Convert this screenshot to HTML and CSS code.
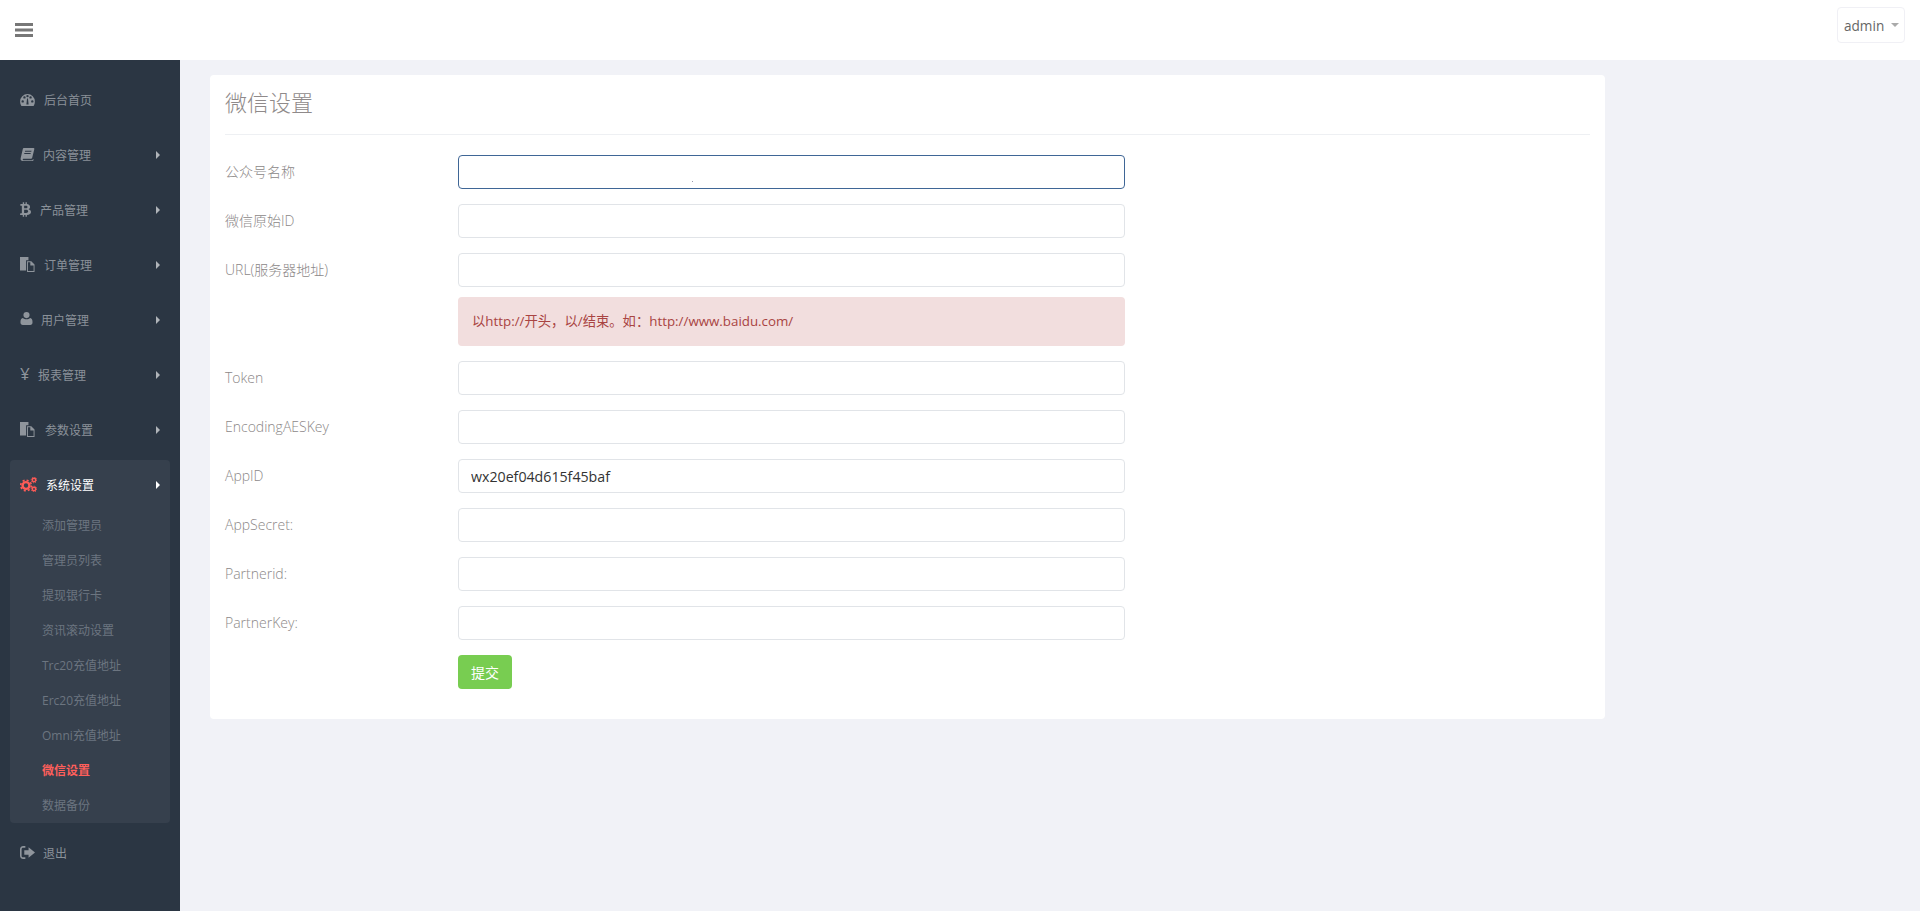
FILE: index.html
```html
<!DOCTYPE html>
<html lang="zh">
<head>
<meta charset="utf-8">
<title>微信设置</title>
<link rel="stylesheet" href="styles.css">
</head>
<body>
<header class="topbar">
  <svg class="burger" viewBox="0 0 18 14"><path d="M0 0h18v3H0zM0 5.500h18v3H0zM0 11h18v3H0z"/></svg>
  <button class="user-btn">admin <span class="caret"></span></button>
</header>
<div class="main">
  <aside class="sidebar">
    <a class="nav-item"><svg class="ico ico-gauge" viewBox="0 0 16 13"><path fill-rule="evenodd" d="M8 0a8 8 0 0 0-8 8c0 1.700.4 3 1.100 4.400.2.400.5.600.9.600h12c.4 0 .7-.2.900-.6.700-1.400 1.100-2.700 1.100-4.400a8 8 0 0 0-8-8zM2.800 9.300a1.300 1.300 0 1 1 0-2.600 1.300 1.300 0 0 1 0 2.600zM4.700 5a1.300 1.300 0 1 1 0-2.600 1.300 1.300 0 0 1 0 2.600zM8 3.600a1.300 1.300 0 1 1 0-2.600 1.300 1.300 0 0 1 0 2.600zm1.200 7.900H6.800L7.500 5h1zM11.300 5a1.300 1.300 0 1 1 0-2.600 1.300 1.300 0 0 1 0 2.600zm1.900 4.300a1.300 1.300 0 1 1 0-2.600 1.300 1.300 0 0 1 0 2.600z"/></svg><span class="gap-9">后台首页</span></a>
    <a class="nav-item"><svg class="ico" viewBox="0 0 16 16"><path fill-rule="evenodd" d="M4 1h10.500c.6 0 .9.400.8 1l-2.300 9.500c-.2.700-.6 1-1.300 1H3.500c-.8 0-.8 1.500.2 1.500h9.500l.5-1 1 .3-.8 1.700H3c-1.700 0-2.700-1.500-2.300-3L3 2c.2-.6.500-1 1-1zm1.500 3-.3 1H12l.3-1zm-.8 2.500-.3 1h6.800l.3-1z"/></svg><span class="gap-8">内容管理</span><i class="arrow"></i></a>
    <a class="nav-item"><svg class="ico ico-narrow" viewBox="0 0 12 16"><path fill-rule="evenodd" d="M3 0h1.500v2H6V0h1.500v2.100C9.500 2.400 11 3.500 11 5.200c0 1.100-.6 2-1.700 2.500C10.900 8.100 12 9.200 12 10.800c0 2-1.600 3.100-4.500 3.200V16H6v-2H4.500v2H3v-2H0l.4-2H2V4H.4V2H3zm1.500 3.800v2.800h2c1 0 1.700-.5 1.700-1.400 0-.9-.7-1.400-1.700-1.400zm0 4.500v3.400h2.300c1.200 0 2.100-.6 2.100-1.700 0-1.100-.9-1.700-2.100-1.700z"/></svg><span class="gap-9">产品管理</span><i class="arrow"></i></a>
    <a class="nav-item"><svg class="ico" viewBox="0 0 16 16"><path fill-rule="evenodd" d="M0 0h9v3.500H6.500v11H0zM7.500 4.500H12L15.500 8v8h-8zm1 1v9.500h6V9h-3.500V5.500z"/></svg><span class="gap-9">订单管理</span><i class="arrow"></i></a>
    <a class="nav-item"><svg class="ico ico-user" viewBox="0 0 13 14"><path d="M6.500 0a3.300 3.300 0 1 1 0 6.600 3.300 3.300 0 0 1 0-6.600zM2.500 6.500c1 1 2.500 1.300 4 1.300s3-.3 4-1.300c1.700.2 2.500 2 2.500 4.500 0 2-1 3-2.500 3h-8C1 14 0 13 0 11c0-2.500.8-4.300 2.500-4.500z"/></svg><span class="gap-8">用户管理</span><i class="arrow"></i></a>
    <a class="nav-item"><span class="yen">¥</span><span class="gap-8">报表管理</span><i class="arrow"></i></a>
    <a class="nav-item"><svg class="ico" viewBox="0 0 16 16"><path fill-rule="evenodd" d="M0 0h9v3.500H6.500v11H0zM7.500 4.500H12L15.500 8v8h-8zm1 1v9.500h6V9h-3.500V5.500z"/></svg><span class="gap-10">参数设置</span><i class="arrow"></i></a>
    <div class="nav-group">
      <a class="nav-item active"><svg class="ico ico-cogs" viewBox="0 0 17 15"><g fill="none" stroke="#ff5b57"><circle cx="6" cy="8.500" r="3.400" stroke-width="2.400"/><circle cx="6" cy="8.500" r="5.300" stroke-width="1.600" stroke-dasharray="2.080 2.080"/><circle cx="14" cy="3" r="1.700" stroke-width="1.500"/><circle cx="14" cy="3" r="2.800" stroke-width="1" stroke-dasharray="1.100 1.100"/><circle cx="14" cy="12" r="1.700" stroke-width="1.500"/><circle cx="14" cy="12" r="2.800" stroke-width="1" stroke-dasharray="1.100 1.100"/></g></svg><span class="gap-9">系统设置</span><i class="arrow"></i></a>
      <ul class="subnav">
        <li>添加管理员</li>
        <li>管理员列表</li>
        <li>提现银行卡</li>
        <li>资讯滚动设置</li>
        <li>Trc20充值地址</li>
        <li>Erc20充值地址</li>
        <li>Omni充值地址</li>
        <li class="current">微信设置</li>
        <li>数据备份</li>
      </ul>
    </div>
    <a class="nav-item logout"><svg class="ico ico-exit" viewBox="0 0 14 12"><path d="M5 0v1.500H3C2 1.500 1.500 2 1.500 3v6c0 1 .5 1.500 1.500 1.500h2V12H3C1.200 12 0 10.800 0 9V3C0 1.200 1.200 0 3 0z"/><path d="M8 1l6 5-6 5V8H4V4h4z"/></svg><span class="gap-8">退出</span></a>
  </aside>
  <main class="content">
    <section class="card">
      <h1 class="card-title">微信设置</h1>
      <form class="form">
        <div class="row"><label>公众号名称</label><input class="field focused" type="text"></div>
        <div class="row"><label>微信原始ID</label><input class="field" type="text"></div>
        <div class="row"><label>URL(服务器地址)</label><input class="field" type="text"></div>
        <div class="row"><span class="spacer"></span><div class="alert">以http://开头，以/结束。如：http://www.baidu.com/</div></div>
        <div class="row"><label>Token</label><input class="field" type="text"></div>
        <div class="row"><label>EncodingAESKey</label><input class="field" type="text"></div>
        <div class="row"><label>AppID</label><input class="field" type="text" value="wx20ef04d615f45baf"></div>
        <div class="row"><label>AppSecret:</label><input class="field" type="text"></div>
        <div class="row"><label>Partnerid:</label><input class="field" type="text"></div>
        <div class="row"><label>PartnerKey:</label><input class="field" type="text"></div>
        <div class="row"><span class="spacer"></span><button class="submit" type="button">提交</button></div>
      </form>
    </section>
  </main>
</div>
</body>
</html>
```
FILE: styles.css
```css
* { box-sizing: border-box; }
html, body { height: 100%; }
body {
  margin: 0;
  display: flex;
  flex-direction: column;
  background: #f1f2f7;
  font-family: "Open Sans", "Noto Sans CJK SC", sans-serif;
  font-size: 14px;
  color: #676a6c;
  overflow: hidden;
}
.topbar {
  height: 60px;
  flex: none;
  background: #fff;
  display: flex;
  align-items: center;
  justify-content: space-between;
  padding: 0 15px;
}
.burger { width: 18px; height: 14px; fill: #777; }
.user-btn {
  height: 36px;
  width: 68px;
  margin-top: -10px;
  background: #fff;
  border: 1px solid #f0f0f5;
  border-radius: 4px;
  font: 13.600px "Open Sans", sans-serif;
  color: #666;
  padding: 0 0 0 6px;
  display: flex;
  align-items: center;
  gap: 7px;
}
.caret {
  width: 0;
  height: 0;
  border-left: 4px solid transparent;
  border-right: 4px solid transparent;
  border-top: 4px solid #aaa;
}
.main { flex: 1; display: flex; min-height: 0; }
.sidebar {
  width: 180px;
  flex: none;
  background: #2b3643;
  padding-top: 12.500px;
  font-size: 12px;
}
.nav-item {
  height: 55px;
  display: flex;
  align-items: center;
  padding: 0 20px;
  color: #8a9199;
  position: relative;
}
.ico { width: 15px; height: 15px; fill: #8f959c; flex: none; margin-top: -1px; }
.ico-gauge { height: 12px; }
.ico-narrow { width: 11px; }
.ico-user { width: 13px; height: 13px; margin-top: -3px; }
.ico-cogs { width: 17px; height: 15px; }
.ico-exit { width: 15px; height: 13px; margin-top: -2px; }
.yen { font-size: 17px; line-height: 17px; color: #8f959c; width: 10px; margin-top: -4px; }
.gap-8 { margin-left: 8px; }
.gap-9 { margin-left: 9px; }
.gap-10 { margin-left: 10px; }
.arrow {
  position: absolute;
  right: 20px;
  top: 50%;
  margin-top: -4px;
  border-left: 4px solid #b0b4b9;
  border-top: 4px solid transparent;
  border-bottom: 4px solid transparent;
}
.nav-group {
  margin: 2.500px 10px 0;
  background: #36404d;
  border-radius: 4px;
}
.nav-item.active { height: 50px; padding: 0 10px; color: #fff; }
.nav-item.active .arrow { right: 10px; border-left-color: #fff; }
.subnav { list-style: none; margin: -2px 0 0; padding: 0; color: #6c7580; }
.subnav li { height: 35px; line-height: 35px; padding-left: 32px; }
.subnav .current { color: #ff5f5b; font-weight: 700; }
.logout { margin-top: 2.500px; }
.content { flex: 1; padding: 15px 0 0 30px; }
.card {
  width: 1395px;
  height: 644px;
  background: #fff;
  border-radius: 4px;
  padding: 0 15px;
}
.card-title {
  margin: 0;
  height: 60px;
  padding-top: 12px;
  border-bottom: 1px solid #eef0f3;
  font-size: 22px;
  line-height: 30px;
  font-weight: 300;
  color: #8f8a8a;
}
.form { padding-top: 20px; }
.row { display: flex; margin-bottom: 15px; }
.row label, .spacer { width: 233px; flex: none; }
.row label { line-height: 34px; font-weight: 300; color: #8c8888; }
.field {
  width: 667px;
  height: 34px;
  border: 1px solid #e1e4e8;
  border-radius: 4px;
  padding: 0 12px;
  font: 14.200px "Open Sans", sans-serif;
  color: #333;
  background: #fff;
  outline: none;
}
.focused {
  border-color: #3f6696;
  background: linear-gradient(#99a, #99a) no-repeat 233px 25px / 1px 1px #fff;
}
.alert {
  width: 667px;
  height: 49px;
  margin: -5px 0 0;
  background: #f2dede;
  color: #a94442;
  border-radius: 4px;
  padding: 0 14px;
  font-size: 13.330px;
  line-height: 49px;
}
.submit {
  width: 54px;
  height: 34px;
  border: none;
  border-radius: 4px;
  background: #78cd51;
  color: #fff;
  font-size: 14px;
  padding: 0;
  font-family: inherit;
}
```
